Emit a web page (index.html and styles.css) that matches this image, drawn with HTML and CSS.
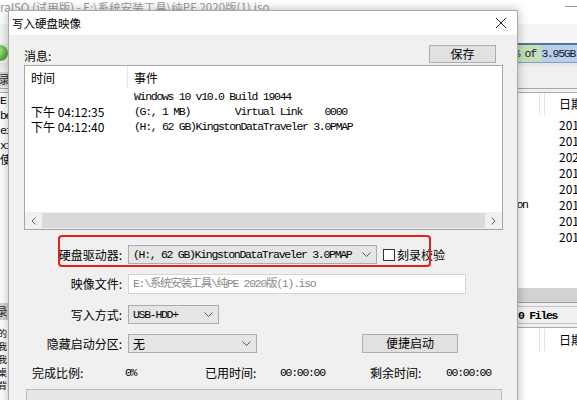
FILE: index.html
```html
<!DOCTYPE html>
<html lang="zh-CN">
<head>
  <meta charset="UTF-8">
  <title>写入硬盘映像</title>
  <link rel="stylesheet" href="styles.css">
</head>
<body>
  <div class="app">
    <div class="app-title">
      <span>raISO (试用版) - E:\系统安装工具\纯PE 2020版(1).iso</span>
      <span class="min"></span>
    </div>
    <div class="app-menu"></div>
    <div class="app-tools">
      <span class="tool-icon"></span>
      <div class="capacity mono">% of 3.95GB</div>
    </div>
    <div class="app-sub">
      <div class="pane-title">目录</div>
    </div>
    <div class="app-sep"></div>

    <div class="app-main">
      <div class="tree">
        <div class="tree-top mono">
          <div class="tree-row">E</div>
          <div class="tree-row">be</div>
          <div class="tree-row">ei</div>
          <div class="tree-row">xi</div>
          <div class="tree-row">使</div>
        </div>
        <div class="pane-title low">录</div>
        <div class="tree-low">
          <div class="tree-row">的</div>
          <div class="tree-row">我</div>
          <div class="tree-row">我</div>
          <div class="tree-row">桌</div>
          <div class="tree-row">背</div>
        </div>
      </div>

      <div class="files">
        <div class="files-list">
          <div class="frow fhead">
            <span></span><span></span><span></span><span class="fdate">日期</span>
          </div>
          <div class="frows">
            <div class="frow"><span></span><span></span><span></span><span class="fdate">2019-03-19</span></div>
            <div class="frow"><span></span><span></span><span></span><span class="fdate">2019-03-19</span></div>
            <div class="frow"><span></span><span></span><span></span><span class="fdate">2020-05-12</span></div>
            <div class="frow"><span></span><span></span><span></span><span class="fdate">2019-03-19</span></div>
            <div class="frow"><span></span><span></span><span></span><span class="fdate">2019-03-19</span></div>
            <div class="frow"><span></span><span class="mono">Application</span><span></span><span class="fdate">2019-03-19</span></div>
            <div class="frow"><span></span><span></span><span></span><span class="fdate">2019-03-19</span></div>
            <div class="frow"><span></span><span></span><span></span><span class="fdate">2019-03-19</span></div>
          </div>
        </div>
        <div class="band"></div>
        <div class="status">
          <span class="status-cell"></span>
          <span class="status-cell mono bold">0 Files</span>
        </div>
        <div class="frow fhead low">
          <span></span><span></span><span></span><span class="fdate">日期</span>
        </div>
      </div>
    </div>
  </div>

  <div class="dialog">
    <div class="dlg-title">
      <span>写入硬盘映像</span>
      <svg class="dlg-close" width="10" height="10" viewBox="0 0 10 10"><path d="M0 0L10 10M10 0L0 10" stroke="#222" stroke-width="1"/></svg>
    </div>
    <div class="dlg-body">
      <div class="msg-head">
        <span>消息:</span>
        <button class="btn save">保存</button>
      </div>

      <div class="log">
        <div class="log-head">
          <span class="col-time">时间</span>
          <span class="col-event">事件</span>
        </div>
        <div class="log-rows">
          <div class="log-row"><span class="col-time"></span><span class="col-event mono">Windows 10 v10.0 Build 19044</span></div>
          <div class="log-row"><span class="col-time">下午 04:12:35</span><span class="col-event mono">(G:, 1 MB)        Virtual Link    0000</span></div>
          <div class="log-row"><span class="col-time">下午 04:12:40</span><span class="col-event mono">(H:, 62 GB)KingstonDataTraveler 3.0PMAP</span></div>
        </div>
        <div class="hscroll">
          <span class="arrow"><svg width="5" height="8" viewBox="0 0 5 8"><path d="M4.5 0.5L1 4L4.5 7.5" fill="none" stroke="#606060"/></svg></span>
          <span class="thumb"></span>
          <span class="arrow"><svg width="5" height="8" viewBox="0 0 5 8"><path d="M0.5 0.5L4 4L0.5 7.5" fill="none" stroke="#606060"/></svg></span>
        </div>
      </div>

      <div class="form">
        <label>硬盘驱动器:</label>
        <div class="field drive">
          <div class="select w-drive">
            <span class="mono">(H:, 62 GB)KingstonDataTraveler 3.0PMAP</span>
            <svg class="chev" width="9" height="5" viewBox="0 0 9 5"><path d="M0.5 0.5L4.5 4.5L8.5 0.5" fill="none" stroke="#555"/></svg>
          </div>
          <span class="check"></span>
          <span>刻录校验</span>
          <span class="mark"></span>
        </div>

        <label>映像文件:</label>
        <div class="field">
          <div class="input mono">E:\系统安装工具\纯PE 2020版(1).iso</div>
        </div>

        <label>写入方式:</label>
        <div class="field">
          <div class="select w-mode">
            <span class="mono">USB-HDD+</span>
            <svg class="chev" width="9" height="5" viewBox="0 0 9 5"><path d="M0.5 0.5L4.5 4.5L8.5 0.5" fill="none" stroke="#555"/></svg>
          </div>
        </div>

        <label>隐藏启动分区:</label>
        <div class="field">
          <div class="select w-hide">
            <span>无</span>
            <svg class="chev" width="9" height="5" viewBox="0 0 9 5"><path d="M0.5 0.5L4.5 4.5L8.5 0.5" fill="none" stroke="#555"/></svg>
          </div>
          <button class="btn quick">便捷启动</button>
        </div>
      </div>

      <div class="stats">
        <span>完成比例:</span><span class="mono">0%</span>
        <span>已用时间:</span><span class="mono">00:00:00</span>
        <span>剩余时间:</span><span class="mono">00:00:00</span>
      </div>

      <div class="progress"></div>
    </div>
  </div>
</body>
</html>
```

FILE: styles.css
```css
* {
  box-sizing: border-box;
}

body {
  margin: 0;
  width: 577px;
  height: 400px;
  overflow: hidden;
  position: relative;
  background: #f0f0f0;
  font-family: "Noto Sans CJK SC", "Noto Sans", sans-serif;
  font-size: 12px;
  color: #000;
}

.mono {
  font-family: "Liberation Mono", "Noto Sans CJK SC", monospace;
  font-size: 11.5px;
  letter-spacing: -1.3px;
}

.bold {
  font-weight: bold;
}

/* background app window */

.app {
  margin-top: -12px;
}

.app-title {
  height: 36px;
  padding-top: 4px;
  background: #fff;
  color: #9a9a9a;
  font-size: 11.5px;
  line-height: 30px;
  white-space: nowrap;
  display: flex;
}

.app-title .min {
  margin-left: auto;
  width: 12px;
  height: 1px;
  margin-top: 14px;
  background: #999;
}

.app-menu {
  height: 19px;
  background: #f5f5f5;
}

.app-tools {
  height: 20px;
  display: flex;
  align-items: center;
  background: #f0f0f0;
}

.tool-icon {
  width: 16px;
  height: 16px;
  margin-left: -8px;
  border-radius: 50%;
  background: radial-gradient(circle at 40% 35%, #b6e88e, #4aa832 70%, #2f7d22);
}

.capacity {
  margin-left: auto;
  width: 300px;
  height: 20px;
  border-top: 2px solid #4f74a0;
  border-bottom: 1px solid #7f9fc6;
  background: linear-gradient(to right, #c4dfb6 88%, #b5cfec 88%);
  text-align: right;
  padding-right: 2px;
  line-height: 17px;
  white-space: nowrap;
  color: #1a1a1a;
}

.app-sub {
  height: 25px;
  padding-top: 9px;
  background: linear-gradient(#dfe6ef 0, #f0f0f0 6px);
}

.pane-title {
  width: 130px;
  height: 14px;
  margin-left: -13px;
  background: #d6d6d6;
  font-size: 11.5px;
  line-height: 14px;
  color: #333;
}

.app-sep {
  height: 5px;
  border-top: 1px solid #a8a8a8;
  border-bottom: 1px solid #a8a8a8;
  background: #f0f0f0;
}

.app-main {
  display: grid;
  grid-template-columns: 150px 1fr;
  height: 310px;
}

.tree {
  background: #fff;
}

.tree-top {
  height: 210px;
}

.tree-top .tree-row {
  height: 15px;
  line-height: 15px;
}

.pane-title.low {
  margin-left: -4px;
  height: 17px;
  line-height: 17px;
  background: #d3d3d3;
}

.tree-low {
  padding-top: 7px;
  margin-left: -2px;
  font-size: 9px;
}

.tree-low .tree-row {
  height: 13px;
  line-height: 13px;
  overflow: hidden;
}

.files {
  background: #fff;
}

.files-list {
  height: 195px;
}

.frow {
  display: grid;
  grid-template-columns: 1fr 78px 5px 32px;
  height: 16px;
  line-height: 16px;
  font-size: 12px;
  white-space: nowrap;
  overflow: hidden;
}

.frow span {
  padding-left: 4px;
  overflow: hidden;
}

.frow .fdate {
  padding-left: 14px;
}

.fhead {
  height: 22px;
  line-height: 22px;
  font-size: 12px;
}

.fhead span:nth-child(2),
.fhead span:nth-child(3) {
  border-right: 1px solid #e3e3e3;
}

.frows {
  padding-top: 2px;
}

.band {
  height: 14px;
  background: #d2d2d2;
}

.status {
  height: 26px;
  padding-top: 3px;
  border-top: 1px solid #a0a0a0;
  background: #f0f0f0;
  display: flex;
  border-bottom: 1px solid #a8a8a8;
}

.status-cell {
  height: 18px;
  line-height: 17px;
  border-top: 1px solid #c4c4c4;
  border-bottom: 1px solid #c4c4c4;
  white-space: nowrap;
}

.status-cell:first-child {
  width: 362px;
}

.status-cell + .status-cell {
  flex: 1;
  padding-left: 6px;
}

.fhead.low {
  margin-top: 1px;
}

/* dialog */

.dialog {
  position: absolute;
  left: 8px;
  top: 10px;
  width: 510px;
  height: 400px;
  border: 1px solid #a9a9a9;
  background: #f0f0f0;
  box-shadow: 0 0 10px rgba(0, 0, 0, 0.28);
  display: flex;
  flex-direction: column;
}

.dlg-title {
  height: 24px;
  background: #fff;
  display: flex;
  align-items: center;
  padding: 0 11px 0 3px;
  font-size: 11.5px;
}

.dlg-close {
  margin-left: auto;
}

.dlg-body {
  flex: 1;
  padding: 9px 14px 0 15px;
}

.msg-head {
  height: 19px;
  display: flex;
  align-items: flex-end;
  justify-content: space-between;
  line-height: 14px;
}

.btn {
  font-family: "Noto Sans CJK SC", sans-serif;
  font-size: 12px;
  background: #e1e1e1;
  border: 1px solid #adadad;
  padding: 0;
  color: #000;
  line-height: 16px;
}

.btn.save {
  width: 67px;
  height: 18px;
  margin-right: 7px;
}

.log {
  margin-top: 2px;
  height: 165px;
  border: 1px solid #a6a6a6;
  background: #fff;
  display: flex;
  flex-direction: column;
}

.log-head,
.log-row {
  display: flex;
  white-space: pre;
}

.log-head {
  height: 23px;
  line-height: 23px;
}

.col-time {
  width: 103px;
  padding-left: 6px;
}

.log-head .col-time {
  border-right: 1px solid #e5e5e5;
}

.col-event {
  padding-left: 6px;
}

.log-rows {
  flex: 1;
}

.log-row {
  height: 15px;
  line-height: 15px;
}

.hscroll {
  height: 17px;
  display: flex;
  background: #f0f0f0;
}

.arrow {
  width: 17px;
  display: flex;
  align-items: center;
  justify-content: center;
}

.thumb {
  flex: 1;
  margin: 1px 0;
  background: #dadada;
}

.form {
  margin-top: 15px;
  display: grid;
  grid-template-columns: 98px 1fr;
  column-gap: 6px;
  grid-template-rows: 19px 20px 19px 19px;
  row-gap: 10px;
}

.form label:nth-of-type(3),
.form label:nth-of-type(4) {
  margin-top: 1px;
}

.form label {
  text-align: right;
  line-height: 19px;
  white-space: nowrap;
}

.field {
  display: flex;
  align-items: center;
}

.field:nth-of-type(3),
.field:nth-of-type(4) {
  margin-top: 1px;
}

.drive {
  position: relative;
}

.select {
  height: 19px;
  background: #e5e5e5;
  border: 1px solid #acacac;
  padding-left: 4px;
  display: flex;
  align-items: center;
  white-space: pre;
}

.chev {
  margin-left: auto;
  margin-right: 5px;
}

.w-drive {
  width: 249px;
}

.w-mode {
  width: 91px;
}

.w-hide {
  width: 129px;
}

.check {
  width: 12px;
  height: 12px;
  margin: 0 2px 0 6px;
  border: 1px solid #333;
  background: #fff;
}

.mark {
  position: absolute;
  left: -70px;
  top: -10px;
  width: 373px;
  height: 32px;
  border: 2.5px solid #e3221d;
  border-radius: 4px;
}

.input {
  width: 338px;
  height: 20px;
  background: #fff;
  border: 1px solid #d4d4d4;
  padding-left: 4px;
  line-height: 18px;
  color: #8a8a8a;
  white-space: pre;
}

.btn.quick {
  width: 96px;
  height: 19px;
  margin-left: 105px;
}

.stats {
  margin-top: 13px;
  padding-left: 8px;
  display: grid;
  grid-template-columns: 93px 80px 75px 90px 76px 1fr;
  line-height: 16px;
}

.progress {
  margin: 8px 1px 0 2px;
  height: 20px;
  background: #e6e6e6;
  border: 1px solid #bcbcbc;
}
```
